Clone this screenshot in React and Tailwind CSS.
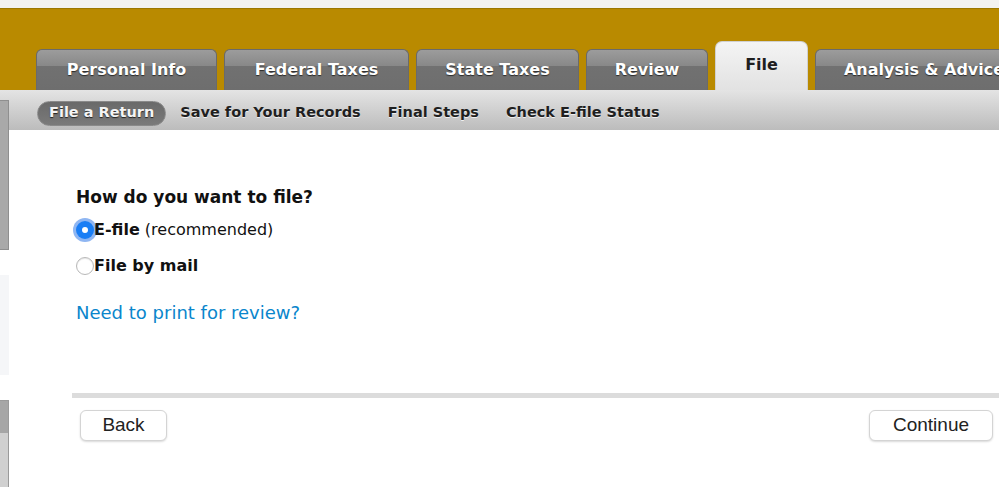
const tabs = [
  { label: 'Personal Info', w: 'w-[181px]' },
  { label: 'Federal Taxes', w: 'w-[185px]' },
  { label: 'State Taxes', w: 'w-[163px]' },
  { label: 'Review', w: 'w-[122px]' },
  { label: 'File', w: 'w-[93px]', active: true },
  { label: 'Analysis & Advice', w: 'w-[218px]' },
]

const subItems = ['File a Return', 'Save for Your Records', 'Final Steps', 'Check E-file Status']

function Tab({ label, w, active }) {
  if (active) {
    return (
      <div className={`${w} h-[49px] shrink-0 rounded-t-[7px] bg-gradient-to-b from-[#f4f4f4] to-[#e2e2e2] border-x border-t border-[#d0d0d0] flex justify-center pt-[11px]`}>
        <span className="text-[16px] font-bold text-[#1e1e1e]">{label}</span>
      </div>
    )
  }
  return (
    <div className={`${w} h-[41px] shrink-0 rounded-t-[6px] border-x border-t border-[#6a6a6a] bg-[linear-gradient(to_bottom,#9c9c9c_0px,#888_16px,#717171_16px,#6e6e6e_100%)] flex items-center justify-center pb-[1px]`}>
      <span className="text-[16px] font-bold text-white whitespace-nowrap [text-shadow:0_1px_1px_#2a2a2a]">{label}</span>
    </div>
  )
}

export default function App() {
  return (
    <div className="w-[999px] h-[487px] overflow-hidden bg-white font-['DejaVu_Sans',sans-serif]">
      {/* top strip */}
      <div className="h-[9px] bg-[#f3f3f1] border-b border-[#9c7800]" />

      {/* gold header with tabs */}
      <div className="h-[81px] bg-[#b98a00] flex items-end gap-[7px] pl-[36px] overflow-hidden">
        {tabs.map((t) => (
          <Tab key={t.label} {...t} />
        ))}
      </div>

      {/* sub navigation */}
      <div className="h-[40px] bg-gradient-to-b from-[#e4e4e4] to-[#bcbcbc] flex items-center pt-[6px] pl-[37px] gap-[14px] text-[14.5px] font-bold text-[#1f1f1f]">
        {subItems.map((s, i) =>
          i === 0 ? (
            <span key={s} className="h-[25px] px-[11px] flex items-center rounded-full bg-gradient-to-b from-[#6a6a6a] to-[#7a7a7a] border border-[#8a8a8a] text-[#f4f4f4] [text-shadow:0_1px_1px_#222]">
              {s}
            </span>
          ) : (
            <span key={s} className="mr-[13px] [text-shadow:0_1px_0_#f0f0f0]">{s}</span>
          )
        )}
      </div>

      {/* body */}
      <div className="flex h-[357px]">
        {/* left edge */}
        <div className="w-[9px] shrink-0 flex flex-col">
          <div className="mt-[-30px] h-[150px] bg-[#a9a9a9] border border-[#8f8f8f] border-l-0" />
          <div className="h-[25px]" />
          <div className="h-[100px] bg-[#f5f6f8]" />
          <div className="h-[25px]" />
          <div className="flex-1 flex flex-col border-t border-r border-[#9a9a9a]">
            <div className="h-[32px] bg-[#a6a6a6]" />
            <div className="flex-1 bg-[#d0d0d0]" />
          </div>
        </div>

        <div className="flex-1 pl-[63px] pt-[55px] flex flex-col">
          <h1 className="text-[17px] font-bold text-[#111] leading-[24px] pl-[4px]">How do you want to file?</h1>

          <div className="mt-[10px] flex items-center h-[22px] pl-[4px]">
            <span className="w-[18px] h-[18px] rounded-full bg-[#1a7ef5] flex items-center justify-center ring-[3px] ring-[#8fb6f2]">
              <span className="w-[6px] h-[6px] rounded-full bg-white" />
            </span>
            <span className="text-[16px] text-[#111]">
              <b>E-file</b> (recommended)
            </span>
          </div>

          <div className="mt-[14px] flex items-center h-[22px] pl-[4px]">
            <span className="w-[18px] h-[18px] rounded-full bg-white border border-[#b8b8b8] shadow-[inset_0_1px_1px_rgba(0,0,0,0.1)]" />
            <span className="text-[16px] font-bold text-[#111]">File by mail</span>
          </div>

          <a className="mt-[24px] pl-[4px] text-[18px] text-[#0a86cc] leading-[24px]">Need to print for review?</a>

          <div className="mt-[68px] h-[5px] bg-[#dcdcdc]" />

          <div className="mt-[12px] flex justify-between pl-[8px] pr-[6px] font-['Liberation_Sans',sans-serif]">
            <button className="w-[87px] h-[31px] rounded-[6px] bg-white border border-[#d4d4d4] shadow-[0_1px_2px_rgba(0,0,0,0.15)] text-[19px] text-[#222]">
              Back
            </button>
            <button className="w-[124px] h-[31px] rounded-[6px] bg-white border border-[#d4d4d4] shadow-[0_1px_2px_rgba(0,0,0,0.15)] text-[19px] text-[#222]">
              Continue
            </button>
          </div>
        </div>
      </div>
    </div>
  )
}
